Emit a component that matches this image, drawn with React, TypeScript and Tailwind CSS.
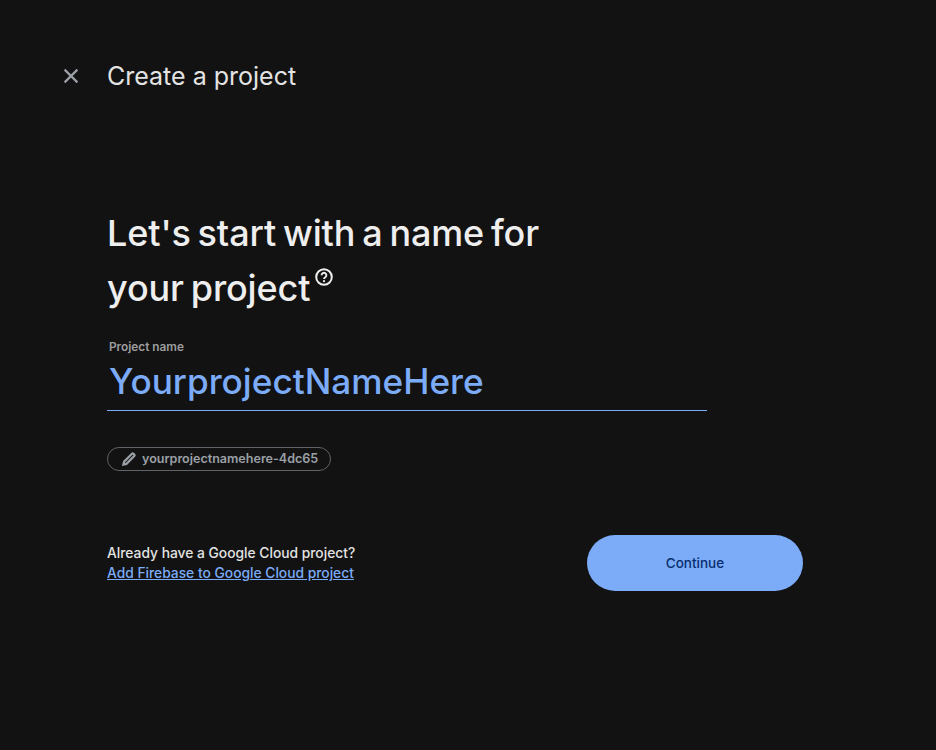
import React from 'react'

export default function App() {
  return (
    <div className="min-h-[750px] w-full bg-[#121212] font-['Inter',sans-serif] text-[#e3e3e3]">
      {/* Header */}
      <header className="flex h-[153px] items-start pl-[61px] pt-[60px]">
        <button className="flex h-8 w-5 items-center justify-center text-[#9aa0a6]">
          <svg width="20" height="20" viewBox="0 0 20 20" fill="none" stroke="currentColor" strokeWidth="2.2">
            <path d="M3.6 3.6 16.4 16.4M16.4 3.6 3.6 16.4" />
          </svg>
        </button>
        <h1 className="ml-[26px] text-[25px] leading-8">Create a project</h1>
      </header>

      <main className="w-[696px] pl-[107px]">
        <h2 className="mt-[53px] text-[36px] font-medium leading-[55px] tracking-[-0.12px] text-[#eeeeee] [word-spacing:-2.6px]">
          Let's start with a name for
          <br />
          your project
          <svg className="ml-[4px] inline-block align-[14px]" width="20" height="20" viewBox="0 0 20 20" fill="none">
            <circle cx="10" cy="10" r="7.8" stroke="currentColor" strokeWidth="2" />
            <path d="M7.6 8.2a2.4 2.4 0 1 1 3.7 2c-.8.5-1.3 1-1.3 1.9" stroke="currentColor" strokeWidth="1.9" />
            <circle cx="10" cy="14.2" r="1.1" fill="currentColor" />
          </svg>
        </h2>

        {/* Name field */}
        <label className="mt-[23px] block pl-[2px] text-[11.8px] font-semibold leading-4 text-[#9e9e9e]">Project name</label>
        <div className="h-[56px] w-[600px] border-b border-[#7cacf8] pl-[2px] pt-[3px] text-[35.2px] font-medium leading-[46px] text-[#7cacf8]">
          YourprojectNameHere
        </div>

        <div className="mt-9 inline-flex h-[24px] items-center rounded-full border border-[#5f6368] pl-[13px] pr-[12px] text-[12.55px] font-semibold text-[#9aa0a6]">
          <svg className="mr-[5px]" width="16" height="16" viewBox="0 0 16 16" fill="none" stroke="currentColor" strokeWidth="2.2">
            <path d="M2.4 13.6 3.1 10.6 11 2.7a1 1 0 0 1 1.4 0l.9.9a1 1 0 0 1 0 1.4L5.4 12.9Z" />
          </svg>
          yourprojectnamehere-4dc65
        </div>
      </main>

      {/* Footer row */}
      <div className="mt-[62px] flex w-[803px] items-center justify-between pl-[107px]">
        <div className="text-[13.8px] font-medium leading-5">
          <p className="text-[#e3e3e3]">Already have a Google Cloud project?</p>
          <a href="#" className="text-[#7cacf8] underline">
            Add Firebase to Google Cloud project
          </a>
        </div>
        <button className="h-14 w-[216px] rounded-full bg-[#7cacf8] text-[13.5px] font-medium text-[#062e6f]">Continue</button>
      </div>
    </div>
  )
}
